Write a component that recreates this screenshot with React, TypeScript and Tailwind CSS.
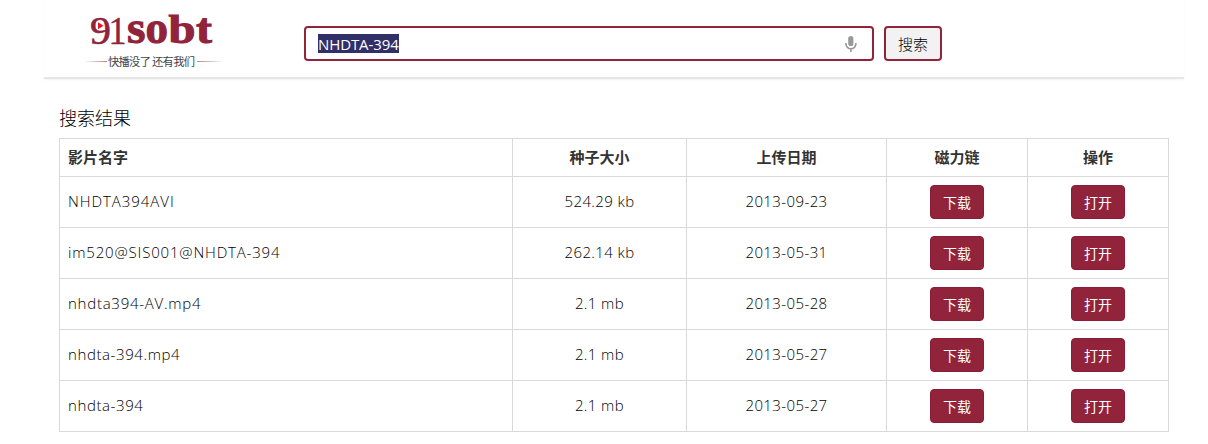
import React from "react";

const rows = [
  { name: "NHDTA394AVI", size: "524.29 kb", date: "2013-09-23", spacing: "tracking-[0.95px]" },
  { name: "im520@SIS001@NHDTA-394", size: "262.14 kb", date: "2013-05-31", spacing: "tracking-[0.82px]" },
  { name: "nhdta394-AV.mp4", size: "2.1 mb", date: "2013-05-28", spacing: "tracking-[0.75px]" },
  { name: "nhdta-394.mp4", size: "2.1 mb", date: "2013-05-27", spacing: "tracking-[0.6px]" },
  { name: "nhdta-394", size: "2.1 mb", date: "2013-05-27", spacing: "tracking-[0.6px]" },
];

function Logo() {
  return (
    <svg width="140" height="78" viewBox="84 0 140 78" className="block">
      <defs>
        <linearGradient id="fadeLeft">
          <stop offset="0" stopColor="#91233b" stopOpacity="0" />
          <stop offset="1" stopColor="#91233b" stopOpacity=".6" />
        </linearGradient>
        <linearGradient id="fadeRight">
          <stop offset="0" stopColor="#91233b" stopOpacity=".6" />
          <stop offset="1" stopColor="#91233b" stopOpacity="0" />
        </linearGradient>
      </defs>
      <g fill="#91233b" stroke="#91233b" fontFamily="'Liberation Serif', serif">
        <text x="90" y="43.5" fontSize="39" strokeWidth=".6" textLength="21" lengthAdjust="spacingAndGlyphs">9</text>
        <text x="108.5" y="43.5" fontSize="39" strokeWidth=".4" textLength="18" lengthAdjust="spacingAndGlyphs">1</text>
        <g fontWeight="700" strokeWidth="1">
          <text x="127" y="43.3" fontSize="46" textLength="18.5" lengthAdjust="spacingAndGlyphs">s</text>
          <text x="145.5" y="43.3" fontSize="46" textLength="22.5" lengthAdjust="spacingAndGlyphs">o</text>
          <text x="168.5" y="43.3" fontSize="39" textLength="27" lengthAdjust="spacingAndGlyphs">b</text>
          <text x="196" y="43.3" fontSize="43" textLength="16" lengthAdjust="spacingAndGlyphs">t</text>
        </g>
      </g>
      <path d="M98 22.3v7l5.5-3.5z" fill="#f0141e" />
      <rect x="84" y="61" width="23" height="1" fill="url(#fadeLeft)" />
      <rect x="197" y="61" width="27" height="1" fill="url(#fadeRight)" />
      <text x="108" y="65.5" fontSize="11.3" fontWeight="400" fill="#444" fontFamily="'Noto Sans CJK SC', sans-serif" textLength="87">快播没了 还有我们</text>
    </svg>
  );
}

function Mic() {
  return (
    <svg width="12" height="16" viewBox="0 0 12 16" className="block">
      <rect x="3.2" y="0" width="5.2" height="10" rx="2.6" fill="#999" />
      <path d="M.9 7v.8a5 5 0 0 0 10 0V7M5.9 12.5V16" fill="none" stroke="#999" strokeWidth="1.6" />
    </svg>
  );
}

function Action({ children }: { children: React.ReactNode }) {
  return (
    <button className="mx-auto block h-[34px] w-[54px] rounded-[4px] border border-[#8c1c36] bg-[#91233b] pt-[2px] text-[14px] leading-[20px] font-normal text-white">
      {children}
    </button>
  );
}

const th = "border-r border-b border-[#d9d9d9] px-2 pb-px text-[15px] leading-5 font-bold text-[#333]";
const td = "border-r border-b border-[#d9d9d9] px-2 text-[15px] leading-5";

export default function App() {
  return (
    <div className="h-[444px] w-[1208px] overflow-hidden bg-white pl-[44px] font-['Open_Sans','Noto_Sans_CJK_SC',sans-serif] font-light text-black">
      <header className="flex h-[79px] w-[1140px] items-start border-b-2 border-[#e5e5e5] pl-10 shadow-[0_1px_2px_#f4f4f4]">
        <div className="w-[220px]">
          <Logo />
        </div>
        <div className="mt-[26px] flex h-[35px] w-[570px] items-center justify-between rounded-[4px] border-2 border-[#91233b] bg-white pr-[15px] pl-3">
          <span className="h-[19px] w-[81px] bg-[#302f68] text-[15px] leading-[20px] font-normal tracking-[-0.1px] whitespace-nowrap text-white">NHDTA-394</span>
          <Mic />
        </div>
        <button className="mt-[26px] ml-[10px] h-[35px] w-[58px] rounded-[4px] border-2 border-[#91233b] bg-[#f2f2f2] text-[15px] leading-5">搜索</button>
      </header>
      <main className="pt-[27px] pl-[15px]">
        <h1 className="h-[32px] text-[18px] leading-[24px] font-light">搜索结果</h1>
        <table className="w-[1110px] table-fixed border-separate border-spacing-0 border-t border-l border-[#d9d9d9]">
          <colgroup>
            <col className="w-[453px]" />
            <col className="w-[174px]" />
            <col className="w-[200px]" />
            <col className="w-[141px]" />
            <col className="w-[141px]" />
          </colgroup>
          <thead>
            <tr className="h-[38px]">
              <th className={`${th} text-left`}>影片名字</th>
              <th className={th}>种子大小</th>
              <th className={th}>上传日期</th>
              <th className={th}>磁力链</th>
              <th className={th}>操作</th>
            </tr>
          </thead>
          <tbody>
            {rows.map((r) => (
              <tr key={r.name} className="h-[51px]">
                <td className={`${td} pb-[2px]`}>
                  <span className={r.spacing}>{r.name}</span>
                </td>
                <td className={`${td} pb-[2px] text-center tracking-[0.4px]`}>{r.size}</td>
                <td className={`${td} pb-[2px] text-center tracking-[0.4px]`}>{r.date}</td>
                <td className={td}>
                  <Action>下载</Action>
                </td>
                <td className={td}>
                  <Action>打开</Action>
                </td>
              </tr>
            ))}
          </tbody>
        </table>
      </main>
    </div>
  );
}
